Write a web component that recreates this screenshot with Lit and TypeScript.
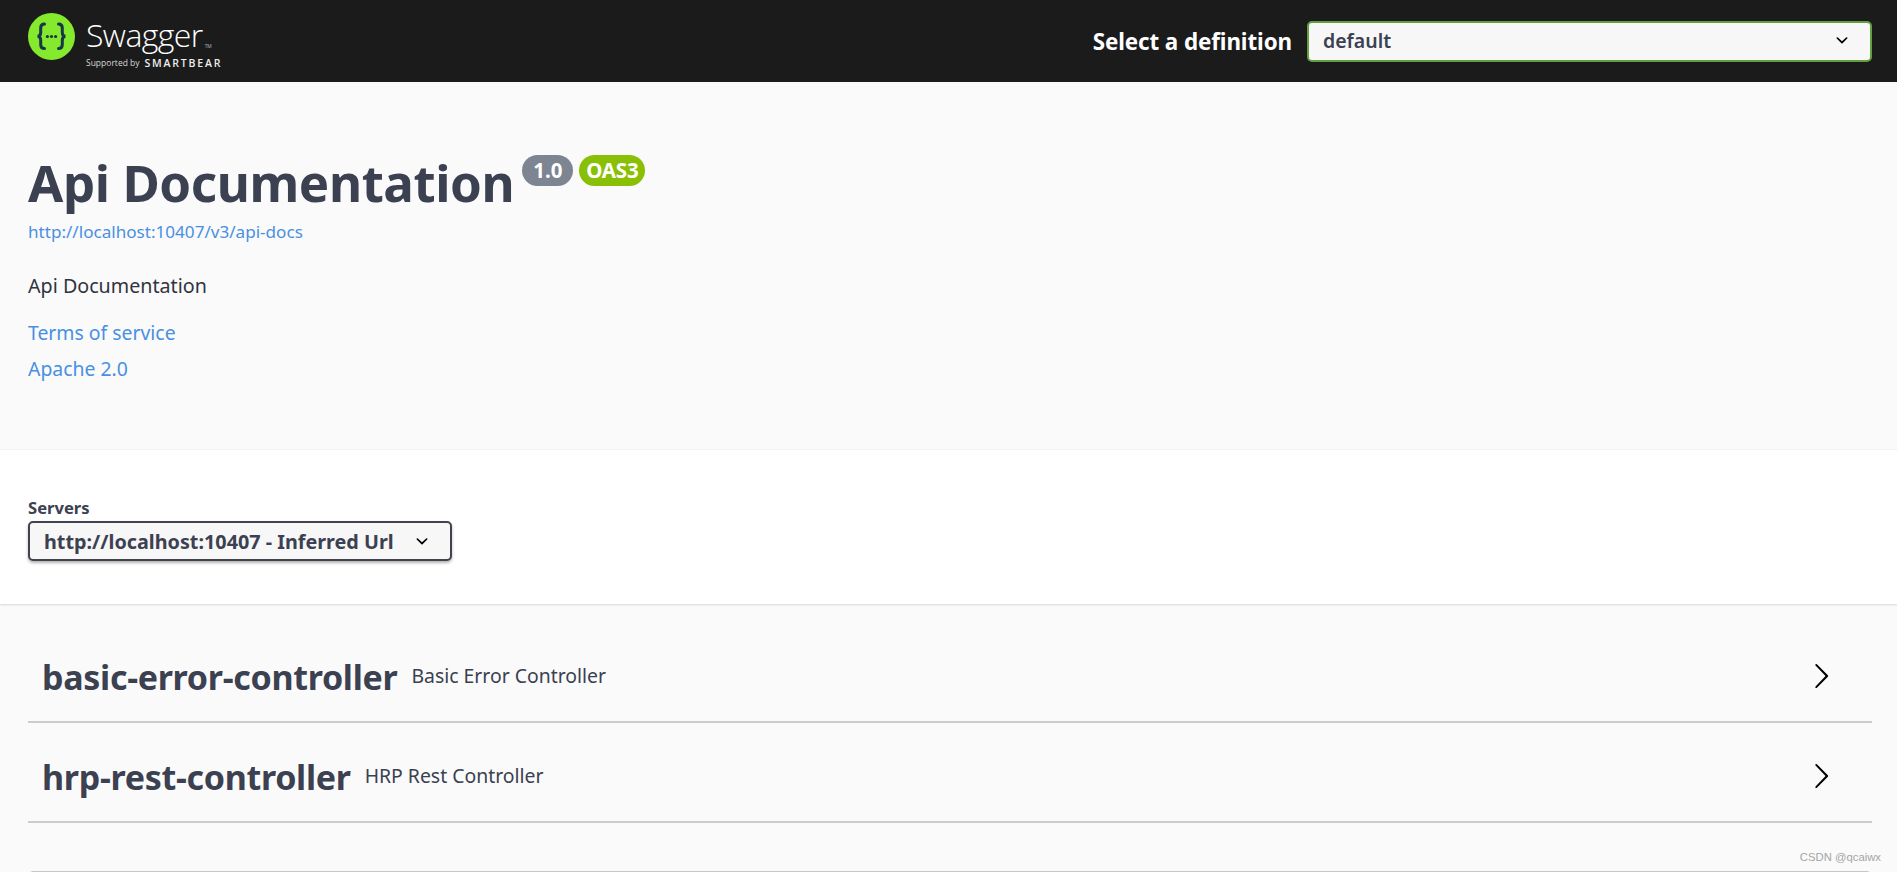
import { LitElement, html, css, svg } from "lit";
import { customElement } from "lit/decorators.js";

const selectArrow = svg`<path d="M13.418 7.859a.695.695 0 01.978 0 .68.68 0 010 .969l-3.908 3.83a.697.697 0 01-.979 0l-3.908-3.83a.68.68 0 010-.969.695.695 0 01.978 0L10 11l3.418-3.141z"/>`;
const rowArrow = svg`<path d="M13.25 10L6.109 2.58a.697.697 0 010-.979.68.68 0 01.969 0l7.83 7.908a.697.697 0 010 .979l-7.83 7.908a.68.68 0 01-.969 0 .697.697 0 010-.979L13.25 10z"/>`;

const tags = [
  { name: "basic-error-controller", desc: "Basic Error Controller" },
  { name: "hrp-rest-controller", desc: "HRP Rest Controller" },
];

@customElement("app-root")
export class AppRoot extends LitElement {
  static styles = css`
    :host {
      display: block;
      height: 872px;
      overflow: hidden;
      position: relative;
      background: #fafafa;
      font-family: "Noto Sans", "Open Sans", sans-serif;
      color: #3b4151;
    }
    a {
      color: #4990e2;
      text-decoration: none;
    }

    .topbar {
      height: 82px;
      box-sizing: border-box;
      background: #1b1b1b;
      display: flex;
      align-items: center;
      justify-content: space-between;
      padding: 0 25px 0 28px;
    }
    .brand {
      display: flex;
      align-items: flex-start;
      gap: 11px;
      align-self: flex-start;
      padding-top: 13px;
    }
    .logo {
      width: 47px;
      height: 47px;
      display: block;
    }
    .wordmark {
      display: flex;
      flex-direction: column;
      color: #fff;
      font-family: "Open Sans", sans-serif;
    }
    .swagger {
      font-size: 32px;
      font-weight: 300;
      line-height: 40px;
      height: 40px;
      letter-spacing: -0.6px;
      margin-top: 2px;
    }
    .swagger sup {
      font-size: 5px;
      line-height: 0;
      letter-spacing: 0;
      margin-left: 2px;
      vertical-align: -1px;
    }
    .support {
      display: flex;
      align-items: center;
      gap: 5px;
      font-size: 8.5px;
      line-height: 12px;
      margin-top: 2px;
      color: #d8d8d8;
      white-space: nowrap;
    }
    .support b {
      font-size: 10.5px;
      font-weight: 600;
      letter-spacing: 1.8px;
      color: #eee;
    }
    .definition {
      display: flex;
      align-items: center;
      gap: 15px;
    }
    .definition label {
      color: #fff;
      font-size: 22.4px;
      font-weight: 700;
      letter-spacing: -0.1px;
    }
    .select {
      display: flex;
      align-items: center;
      justify-content: space-between;
      box-sizing: border-box;
      background: #f7f7f7;
      font-weight: 700;
      color: #3b4151;
    }
    .select svg {
      width: 24px;
      height: 24px;
      display: block;
      flex: none;
    }
    .definition .select {
      width: 565px;
      height: 41px;
      border: 2px solid #62a03f;
      border-radius: 5px;
      padding: 0 16px 2px 14px;
      font-size: 19.5px;
      font-weight: 600;
    }

    .info {
      height: 368px;
      box-sizing: border-box;
      padding: 0 28px;
      border-bottom: 1px solid #f4f4f4;
    }
    .title-row {
      display: flex;
      align-items: flex-start;
      height: 65px;
      padding-top: 73px;
    }
    h1 {
      margin: -11px 0 0;
      font-size: 51px;
      line-height: 76px;
      font-weight: 700;
      letter-spacing: -0.4px;
    }
    .badge {
      box-sizing: border-box;
      height: 31px;
      border-radius: 15.5px;
      color: #fff;
      font-size: 20.5px;
      font-weight: 700;
      line-height: 31px;
      text-align: center;
      flex: none;
    }
    .version {
      width: 51px;
      margin-left: 8px;
      background: #7d8492;
    }
    .oas {
      width: 66px;
      margin-left: 6px;
      background: #89bf04;
      letter-spacing: -0.2px;
    }
    .url {
      display: block;
      font-size: 17.1px;
      line-height: 24px;
      font-weight: 400;
    }
    .desc {
      font-size: 19.7px;
      line-height: 24px;
      color: #30343f;
      margin-top: 30px;
    }
    .links {
      display: flex;
      flex-direction: column;
      align-items: flex-start;
      gap: 11px;
      margin-top: 22px;
      font-size: 19.4px;
      line-height: 25px;
    }

    .servers {
      height: 154px;
      box-sizing: border-box;
      background: #fff;
      padding: 48px 28px 0;
      box-shadow: 0 1px 2px rgba(0, 0, 0, 0.15);
      position: relative;
    }
    .servers .label {
      font-size: 16.6px;
      font-weight: 700;
      line-height: 20px;
      margin-bottom: 3px;
    }
    .servers .select {
      width: 424px;
      height: 40px;
      border: 2px solid #41444e;
      border-radius: 5px;
      padding: 0 16px 0 14px;
      font-size: 19.8px;
      box-shadow: 0 2px 3px 0 rgba(0, 0, 0, 0.3);
      white-space: nowrap;
    }

    .tags {
      padding: 0 25px 0 28px;
      margin-top: 26px;
    }
    .tag {
      height: 93px;
      margin-top: 7px;
      display: flex;
      align-items: center;
      box-sizing: border-box;
      padding: 0 37px 0 14px;
      border-bottom: 2px solid #cbccd0;
    }
    .tag:first-child {
      margin-top: 0;
    }
    .tag h3 {
      margin: 2px 0 0;
      font-size: 34px;
      font-weight: 700;
      line-height: 48px;
      letter-spacing: -0.3px;
    }
    .tag small {
      font-size: 19.4px;
      margin-left: 14px;
      flex: 1;
    }
    .tag svg {
      width: 28px;
      height: 28px;
      flex: none;
      fill: #000;
    }
    .next {
      height: 40px;
      margin-top: 48px;
      border: 1px solid #c6c7cb;
      border-radius: 5px;
    }

    .watermark {
      position: absolute;
      right: 16px;
      top: 849px;
      font-family: "Liberation Sans", Arial, sans-serif;
      font-size: 11.3px;
      line-height: 16px;
      color: #a5a5a5;
    }
  `;

  render() {
    return html`
      <header class="topbar">
        <div class="brand">
          <svg class="logo" viewBox="0 0 47 47">
            <circle cx="23.5" cy="23.5" r="23.5" fill="#85ea2d" />
            <g fill="none" stroke="#173647" stroke-width="3" stroke-linecap="round">
              <path d="M16.5 11c-3 0-3.8 1.6-3.8 4v4.4c0 2.2-1 3.6-3 3.9 2 .3 3 1.7 3 3.9V31.6c0 2.4.8 4 3.8 4" />
              <path d="M30.5 11c3 0 3.8 1.6 3.8 4v4.4c0 2.2 1 3.6 3 3.9-2 .3-3 1.7-3 3.9V31.6c0 2.4-.8 4-3.8 4" />
            </g>
            <g fill="#173647">
              <circle cx="19.4" cy="23.5" r="1.6" />
              <circle cx="23.5" cy="23.5" r="1.6" />
              <circle cx="27.6" cy="23.5" r="1.6" />
            </g>
          </svg>
          <div class="wordmark">
            <span class="swagger">Swagger<sup>TM</sup></span>
            <span class="support">Supported by <b>SMARTBEAR</b></span>
          </div>
        </div>
        <div class="definition">
          <label>Select a definition</label>
          <div class="select">
            <span>default</span>
            <svg viewBox="0 0 20 20">${selectArrow}</svg>
          </div>
        </div>
      </header>

      <section class="info">
        <div class="title-row">
          <h1>Api Documentation</h1>
          <span class="badge version">1.0</span>
          <span class="badge oas">OAS3</span>
        </div>
        <a class="url" href="#">http://localhost:10407/v3/api-docs</a>
        <div class="desc">Api Documentation</div>
        <div class="links">
          <a href="#">Terms of service</a>
          <a href="#">Apache 2.0</a>
        </div>
      </section>

      <section class="servers">
        <div class="label">Servers</div>
        <div class="select">
          <span>http://localhost:10407 - Inferred Url</span>
          <svg viewBox="0 0 20 20">${selectArrow}</svg>
        </div>
      </section>

      <section class="tags">
        ${tags.map(
          (t) => html`
            <div class="tag">
              <h3>${t.name}</h3>
              <small>${t.desc}</small>
              <svg viewBox="0 0 20 20">${rowArrow}</svg>
            </div>
          `
        )}
        <div class="next"></div>
      </section>

      <div class="watermark">CSDN @qcaiwx</div>
    `;
  }
}
